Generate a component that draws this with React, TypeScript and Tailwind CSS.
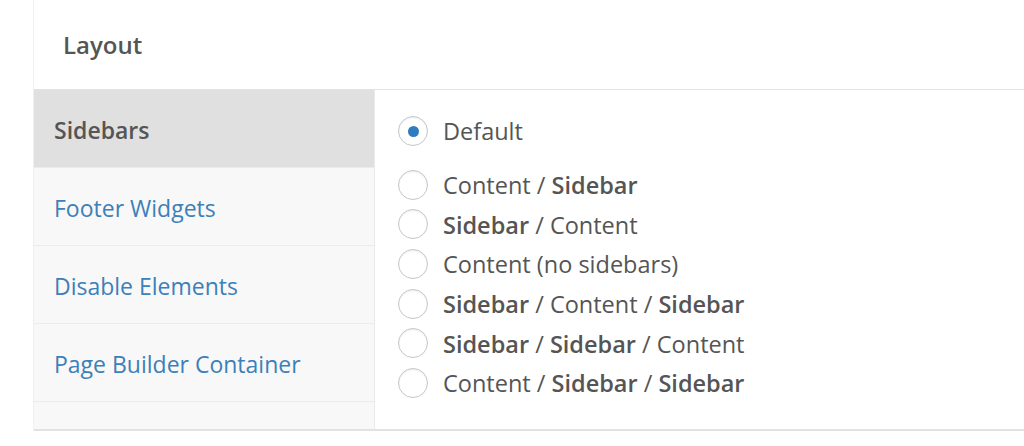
const navItems = [
  { label: "Sidebars", active: true },
  { label: "Footer Widgets" },
  { label: "Disable Elements" },
  { label: "Page Builder Container" },
];

type Part = { text: string; bold?: boolean };

const options: Part[][] = [
  [{ text: "Content / " }, { text: "Sidebar", bold: true }],
  [{ text: "Sidebar", bold: true }, { text: " / Content" }],
  [{ text: "Content (no sidebars)" }],
  [{ text: "Sidebar", bold: true }, { text: " / Content / " }, { text: "Sidebar", bold: true }],
  [{ text: "Sidebar", bold: true }, { text: " / " }, { text: "Sidebar", bold: true }, { text: " / Content" }],
  [{ text: "Content / " }, { text: "Sidebar", bold: true }, { text: " / " }, { text: "Sidebar", bold: true }],
];

function Radio({ checked }: { checked?: boolean }) {
  return (
    <span className="flex h-[30px] w-[30px] shrink-0 items-center justify-center rounded-full border border-[#c3c7cb] bg-white shadow-[inset_0_1px_2px_rgba(0,0,0,0.08)]">
      {checked && <span className="h-[11px] w-[11px] rounded-full bg-[#2f7bbf]" />}
    </span>
  );
}

export default function App() {
  return (
    <div
      className="h-[446px] w-[1024px] overflow-hidden bg-white text-[#555]"
      style={{ fontFamily: '"Open Sans", "Noto Sans", sans-serif' }}
    >
      <div className="ml-[33px] border-l border-[#f0f0f0]">
        <div className="flex h-[90px] items-center border-b border-[#e2e2e2] pl-[29px] text-[24px] font-semibold text-[#555]">
          Layout
        </div>
        <div className="flex border-b-2 border-[#e2e2e2]">
          <nav className="w-[341px] shrink-0 border-r border-[#eaeaea] bg-[#f8f8f8] pb-[27px]">
            {navItems.map((item) => (
              <div
                key={item.label}
                className={
                  item.active
                    ? "flex h-[78px] items-center border-b border-[#ececec] bg-[#e0e0e0] pl-[20px] pt-[4px] text-[23px] font-semibold text-[#555]"
                    : "flex h-[78px] items-center border-b border-[#ececec] pl-[20px] pt-[4px] text-[23px] text-[#3c80b8]"
                }
              >
                {item.label}
              </div>
            ))}
          </nav>
          <div className="flex-1 pl-[23px] pt-[21px]">
            <label className="flex h-[40px] items-center gap-[15px] text-[23.5px]">
              <Radio checked />
              <span className="pt-[2px]">Default</span>
            </label>
            <div className="mt-[14px] flex flex-col">
              {options.map((parts, i) => (
                <label key={i} className="flex h-[39.6px] items-center gap-[15px] text-[23.5px]">
                  <Radio />
                  <span className="pt-[2px]">
                    {parts.map((p, j) => (
                      <span key={j} className={p.bold ? "font-semibold" : ""}>
                        {p.text}
                      </span>
                    ))}
                  </span>
                </label>
              ))}
            </div>
          </div>
        </div>
      </div>
    </div>
  );
}
